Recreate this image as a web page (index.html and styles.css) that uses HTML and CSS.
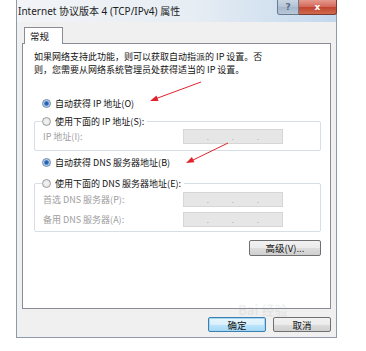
FILE: index.html
```html
<!DOCTYPE html>
<html lang="zh-CN">

<head>
    <meta charset="UTF-8">
    <title>Internet 协议版本 4 (TCP/IPv4) 属性</title>
    <link rel="stylesheet" href="styles.css">
</head>

<body>
    <div class="window">
        <div class="titlebar">
            <span class="title">Internet 协议版本 4 (TCP/IPv4) 属性</span>
            <div class="caps">
                <span class="cap help">?</span>
                <span class="cap close">x</span>
            </div>
        </div>
        <div class="client">
            <div class="tabs">
                <span class="tab">常规</span>
            </div>
            <div class="panel">
                <p class="desc">如果网络支持此功能，则可以获取自动指派的 IP 设置。否<br>则，您需要从网络系统管理员处获得适当的 IP 设置。</p>

                <div class="opt"><span class="dot on"></span>自动获得 IP 地址(O)</div>
                <div class="group">
                    <div class="legend"><span class="dot"></span>使用下面的 IP 地址(S):</div>
                    <div class="field first">
                        <span class="lbl">IP 地址(I):</span>
                        <span class="ipbox"><i>.</i><i>.</i><i>.</i></span>
                    </div>
                </div>

                <div class="opt opt2"><span class="dot on"></span>自动获得 DNS 服务器地址(B)</div>
                <div class="group group2">
                    <div class="legend"><span class="dot"></span>使用下面的 DNS 服务器地址(E):</div>
                    <div class="field first">
                        <span class="lbl">首选 DNS 服务器(P):</span>
                        <span class="ipbox"><i>.</i><i>.</i><i>.</i></span>
                    </div>
                    <div class="field">
                        <span class="lbl">备用 DNS 服务器(A):</span>
                        <span class="ipbox"><i>.</i><i>.</i><i>.</i></span>
                    </div>
                </div>

                <div class="adv-row"><span class="btn adv">高级(V)...</span></div>
            </div>
            <div class="footer">
                <span class="btn default">确定</span>
                <span class="btn">取消</span>
            </div>
        </div>
    </div>

    <!-- 红色标注箭头 -->
    <svg class="marks" width="366" height="351" viewBox="0 0 366 351">
        <line x1="201" y1="82" x2="155" y2="99" stroke="#e2232c" stroke-width="1"/>
        <polygon points="150,101 158.5,101 156.5,95.4" fill="#e2232c"/>
        <line x1="228" y1="143" x2="191" y2="161" stroke="#e2232c" stroke-width="1"/>
        <polygon points="186,163 194.5,162.3 191.9,156.9" fill="#e2232c"/>
    </svg>
    <div class="watermark">Bai 经验</div>
</body>

</html>
```

FILE: styles.css
```css
html,
body {
    margin: 0;
    background-color: #fff;
    font-family: "Noto Sans CJK SC", "Noto Sans", sans-serif;
    color: #111;
}

.window {
    margin-left: 16px;
    width: 321px;
    height: 338px;
    box-sizing: border-box;
    border: 1px solid #8e9aa8;
    border-top: none;
    background-color: #f0f0f0;
    display: flex;
    flex-direction: column;
}

.titlebar {
    height: 22px;
    display: flex;
    justify-content: space-between;
    align-items: flex-start;
    background: linear-gradient(to right, #f2f4f7 0%, #e7edf4 55%, #c3d8ed 100%);
}

.title {
    padding-left: 1px;
    font-family: "Noto Sans", "Noto Sans CJK SC", sans-serif;
    font-size: 10px;
    line-height: 23px;
    color: #1c1c1c;
}

.caps {
    display: flex;
    margin-right: -1px;
}

.cap {
    height: 15px;
    display: flex;
    justify-content: center;
    align-items: center;
    font-family: "DejaVu Sans", sans-serif;
    font-size: 9px;
    font-weight: bold;
    box-sizing: border-box;
    border: 1px solid #6d7a8a;
    border-top: none;
}

.help {
    width: 22px;
    color: #5b6b80;
    background: linear-gradient(#c9d5e2, #b3c3d5 50%, #a5b7cb 50%, #b7c8da);
    border-radius: 0 0 0 3px;
}

.close {
    width: 38px;
    color: #fff;
    border-left: none;
    border-color: #7c3a33;
    background: linear-gradient(#e59a8c, #d2675a 50%, #c0432f 50%, #d06a4c);
    border-radius: 0 0 3px 0;
}

.client {
    flex: 1;
    padding: 5px 5px 0 5px;
    display: flex;
    flex-direction: column;
}

.tabs {
    display: flex;
    margin-bottom: -1px;
}

.tab {
    margin-left: 2px;
    width: 39px;
    height: 17px;
    box-sizing: border-box;
    border: 1px solid #898c95;
    border-bottom: none;
    background-color: #fff;
    font-size: 9.5px;
    line-height: 17px;
    padding-left: 5px;
    position: relative;
    z-index: 1;
}

.panel {
    height: 266px;
    box-sizing: border-box;
    border: 1px solid #898c95;
    background-color: #fff;
    padding-top: 6px;
    font-size: 9px;
}

.desc {
    margin: 0 0 0 11px;
    line-height: 13px;
}

.opt {
    display: flex;
    align-items: center;
    gap: 4px;
    height: 13px;
    margin: 21px 0 0 19px;
}

.opt2 {
    margin-top: 5px;
}

.dot {
    width: 9px;
    height: 9px;
    box-sizing: border-box;
    border-radius: 50%;
    border: 1px solid #9a9a9a;
    background: radial-gradient(circle, #f4f4f4 0, #e2e2e2 100%);
    flex: none;
}

.dot.on {
    border-color: #6f88a8;
    background: radial-gradient(circle, #1f5aa8 0, #2f6cbb 1.8px, #a9c6e6 2.6px, #e9eff6 100%);
}

.group {
    margin: 11px 9px 0 11px;
    border: 1px solid #d5dfe5;
    border-radius: 2px;
    padding: 0 0 6px 7px;
}

.group2 {
    margin-top: 14px;
    padding-bottom: 4px;
}

.legend {
    display: flex;
    align-items: center;
    gap: 4px;
    width: fit-content;
    height: 13px;
    margin-top: -7px;
    padding-right: 3px;
    background-color: #fff;
}

.field {
    display: flex;
    align-items: center;
    height: 15px;
    margin: 5px 0 0 1px;
}

.field.first {
    margin-top: 1px;
}

.group2 .field.first {
    margin-top: 2px;
}

.lbl {
    flex: 0 0 140px;
    color: #9d9d9d;
}

.ipbox {
    width: 100px;
    height: 15px;
    box-sizing: border-box;
    border: 1px solid #d6d6d6;
    background-color: #e6e6e6;
    display: flex;
    justify-content: space-evenly;
    align-items: center;
}

.ipbox i {
    font-style: normal;
    font-size: 8px;
    color: #a8a8a8;
    line-height: 1;
}

.adv-row {
    display: flex;
    justify-content: flex-end;
    margin: 8px 9px 0 0;
}

.btn {
    display: flex;
    justify-content: center;
    align-items: center;
    width: 58px;
    height: 15px;
    box-sizing: border-box;
    border: 1px solid #707070;
    border-radius: 2px;
    background: linear-gradient(#f2f2f2, #ebebeb 50%, #dddddd 50%, #cfcfcf);
    font-size: 9.5px;
    color: #111;
}

.adv {
    width: 72px;
    height: 16px;
}

.btn.default {
    border-color: #3c7fb1;
    background: linear-gradient(#eaf6fd, #d9f0fc 50%, #bee6fd 50%, #a7d9f5);
    box-shadow: inset 0 0 0 1px #a5d6f3;
}

.footer {
    display: flex;
    justify-content: flex-end;
    gap: 7px;
    margin-top: 8px;
}

.marks {
    position: absolute;
    left: 0;
    top: 0;
    pointer-events: none;
}

.watermark {
    position: absolute;
    left: 238px;
    top: 300px;
    font-size: 13px;
    font-weight: bold;
    color: rgba(140, 140, 140, 0.13);
    pointer-events: none;
}
```
